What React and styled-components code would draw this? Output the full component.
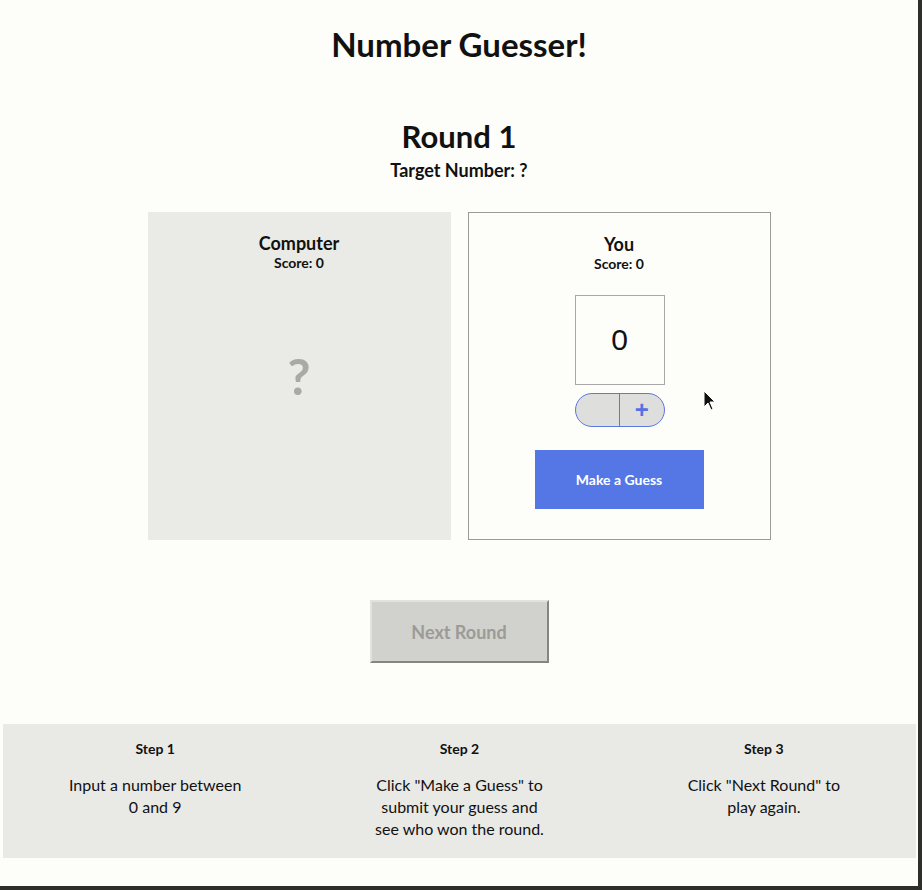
import React from "react";
import styled, { createGlobalStyle } from "styled-components";

const Global = createGlobalStyle`
  html, body { margin: 0; padding: 0; background: #2e2e2b; }
  body { font-family: Lato, "Noto Sans", sans-serif; color: #111; }
  * { box-sizing: border-box; }
`;

const Page = styled.div`
  width: 918px;
  height: 886px;
  background: #fdfdfa;
  display: flex;
  flex-direction: column;
  align-items: center;
  position: relative;
  overflow: hidden;
`;

const Title = styled.h1`
  margin: 25px 0 0;
  font-size: 33px;
  line-height: 38px;
  font-weight: 700;
`;

const RoundTitle = styled.h2`
  margin: 55px 0 0;
  font-size: 31px;
  line-height: 36px;
  font-weight: 700;
`;

const Target = styled.h3`
  margin: 5px 0 0;
  font-size: 18px;
  line-height: 22px;
  font-weight: 700;
`;

const Board = styled.div`
  display: flex;
  gap: 17px;
  margin-top: 31px;
`;

const Panel = styled.section`
  width: 303px;
  height: 328px;
  display: flex;
  flex-direction: column;
  align-items: center;
  padding-top: 20px;
  background: ${(p) => (p.$outlined ? "#fdfdfa" : "#eaeae7")};
  border: ${(p) => (p.$outlined ? "1px solid #9a9a98" : "none")};
`;

const PanelName = styled.h4`
  margin: 0;
  font-size: 18px;
  line-height: 22px;
  font-weight: 700;
`;

const Score = styled.div`
  font-size: 14px;
  line-height: 18px;
  font-weight: 700;
`;

const Mystery = styled.div`
  flex: 1;
  display: flex;
  align-items: center;
  justify-content: center;
  font-size: 50px;
  font-weight: 700;
  color: #a9a9a7;
  padding-bottom: 60px;
`;

const NumberBox = styled.div`
  margin: 22px 0 0 1px;
  width: 90px;
  height: 90px;
  border: 1px solid #a8a8a6;
  display: flex;
  align-items: center;
  justify-content: center;
  font-family: "Liberation Sans", Arial, sans-serif;
  font-size: 30px;
  color: #111;
  background: #fdfdfa;
`;

const Stepper = styled.div`
  margin: 8px 0 0 1px;
  width: 90px;
  height: 34px;
  display: flex;
  border: 1px solid #5a78e0;
  border-radius: 17px;
  overflow: hidden;
  background: #dededc;
`;

const StepButton = styled.button`
  flex: 1;
  border: none;
  border-left: ${(p) => (p.$divided ? "1px solid #5a78e0" : "none")};
  background: transparent;
  color: #5672e0;
  font-family: "Liberation Sans", Arial, sans-serif;
  font-size: 24px;
  font-weight: 700;
  line-height: 1;
  padding: 0 0 1px;
`;

const GuessButton = styled.button`
  margin-top: 23px;
  width: 169px;
  height: 59px;
  border: none;
  background: #5577e6;
  color: #fff;
  font-family: inherit;
  font-size: 14px;
  font-weight: 700;
`;

const NextButton = styled.button`
  margin-top: 60px;
  width: 179px;
  height: 63px;
  background: #d1d1cd;
  color: #9b9b98;
  font-family: inherit;
  font-size: 18px;
  font-weight: 700;
  border: 2px solid;
  border-color: #e2e2de #86867f #86867f #e2e2de;
`;

const Footer = styled.footer`
  align-self: stretch;
  margin: 61px 2px 0 3px;
  background: #e9e9e6;
  display: grid;
  grid-template-columns: repeat(3, 1fr);
  padding: 16px 0 18px;
`;

const Step = styled.div`
  display: flex;
  flex-direction: column;
  align-items: center;
  text-align: center;
`;

const StepTitle = styled.h5`
  margin: 0;
  font-size: 14px;
  line-height: 18px;
  font-weight: 700;
`;

const StepText = styled.p`
  margin: 16px 0 0;
  max-width: 178px;
  font-size: 16px;
  line-height: 22px;
`;

const Cursor = styled.svg`
  position: absolute;
  left: 703px;
  top: 390px;
`;

export default function App() {
  return (
    <>
      <Global />
      <Page>
        <Title>Number Guesser!</Title>
        <RoundTitle>Round 1</RoundTitle>
        <Target>Target Number: ?</Target>
        <Board>
          <Panel>
            <PanelName>Computer</PanelName>
            <Score>Score: 0</Score>
            <Mystery>?</Mystery>
          </Panel>
          <Panel $outlined>
            <PanelName>You</PanelName>
            <Score>Score: 0</Score>
            <NumberBox>0</NumberBox>
            <Stepper>
              <StepButton aria-label="decrease"></StepButton>
              <StepButton $divided>+</StepButton>
            </Stepper>
            <GuessButton>Make a Guess</GuessButton>
          </Panel>
        </Board>
        <NextButton>Next Round</NextButton>
        <Footer>
          <Step>
            <StepTitle>Step 1</StepTitle>
            <StepText>Input a number between 0 and 9</StepText>
          </Step>
          <Step>
            <StepTitle>Step 2</StepTitle>
            <StepText>Click "Make a Guess" to submit your guess and see who won the round.</StepText>
          </Step>
          <Step>
            <StepTitle>Step 3</StepTitle>
            <StepText>Click "Next Round" to play again.</StepText>
          </Step>
        </Footer>
        <Cursor width="14" height="22" viewBox="0 0 14 22">
          <path d="M1 1 L1 17 L5 13 L8 20 L10 19 L7 12 L12 12 Z" fill="#111" stroke="#fff" strokeWidth="1" />
        </Cursor>
      </Page>
    </>
  );
}
